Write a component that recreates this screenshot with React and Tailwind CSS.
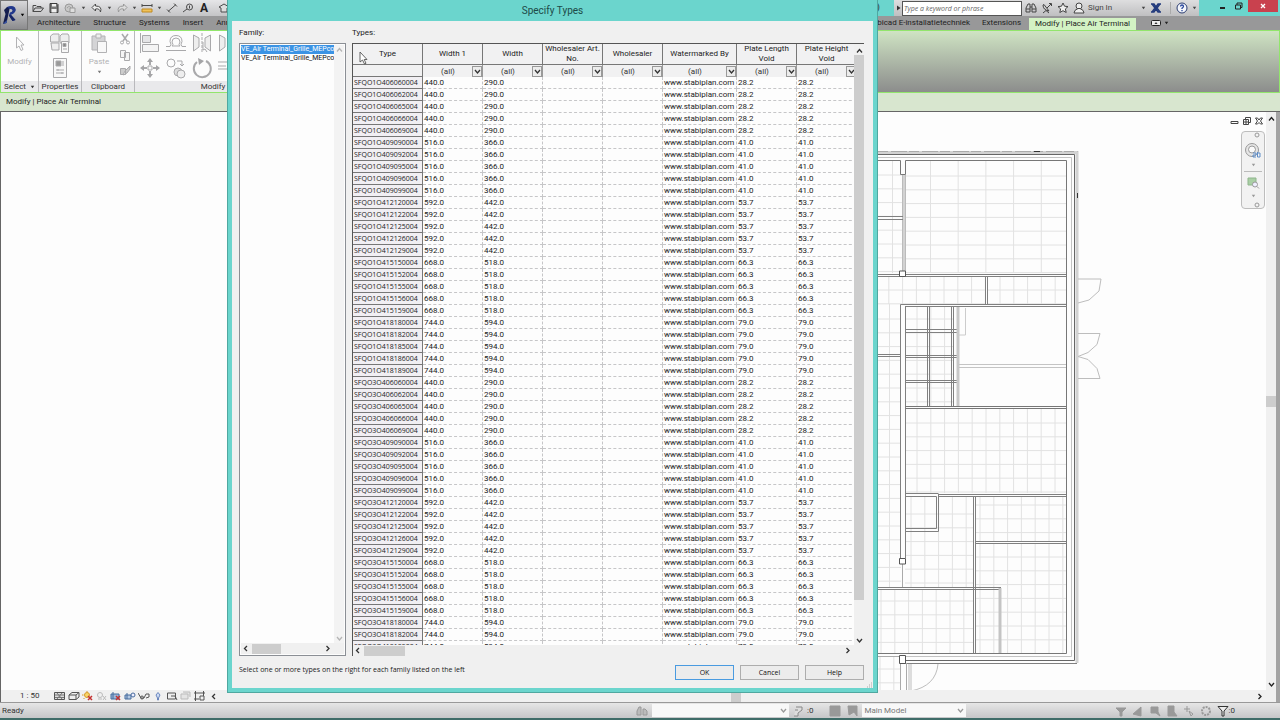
import React from "react";

/* ---------- data ---------- */
const SIZES = [
  { base: "40606", w1: "440.0", w: "290.0", v: "28.2" },
  { base: "40909", w1: "516.0", w: "366.0", v: "41.0" },
  { base: "41212", w1: "592.0", w: "442.0", v: "53.7" },
  { base: "41515", w1: "668.0", w: "518.0", v: "66.3" },
  { base: "41818", w1: "744.0", w: "594.0", v: "79.0" },
];
const ROWS = ["SFQO1O", "SFQO3O"].flatMap((p) =>
  SIZES.flatMap((s) => ["0", "2", "5", "6", "9"].map((n) => ({ type: p + s.base + n + "004", ...s })))
).slice(0, 48);
const COLUMNS = ["Width 1", "Width", "Wholesaler Art. No.", "Wholesaler", "Watermarked By", "Plate Length Void", "Plate Height Void"];

/* ---------- small drawings ---------- */
function Glyph({ w = 12, h = 12, className = "", children }) {
  return (
    <svg width={w} height={h} viewBox={`0 0 ${w} ${h}`} fill="none" stroke="currentColor" strokeWidth="1" className={`shrink-0 ${className}`} aria-hidden="true">
      {children}
    </svg>
  );
}
function Chevron({ dir, className = "" }) {
  const d = { up: "M2 6.5 4.5 3.5 7 6.5", down: "M2 3 4.5 6 7 3", left: "M6 2 3.5 4.5 6 7", right: "M3.5 2 6 4.5 3.5 7" }[dir];
  return <Glyph w={9} h={9} className={className}><path d={d} strokeWidth="1.3" /></Glyph>;
}
function Caret({ className = "" }) {
  return <Glyph w={5} h={4} className={className}><path d="M.8 .8h3.4L2.5 3.2z" fill="currentColor" stroke="none" /></Glyph>;
}
function IconButton({ label, className = "", children }) {
  return <button type="button" aria-label={label} className={`flex shrink-0 items-center justify-center ${className}`}>{children}</button>;
}

function Logo() {
  return (
    <svg width="16" height="20" viewBox="0 0 16 20" aria-hidden="true">
      <path d="M1 5 4 2l3 0-1.500 7L3.500 18 0 19 2.500 9z" fill="#141d4f" />
      <path d="M4 2q5-2 8 .5 1.500 2 0 4.500-1.500 2-4 2.800L12.500 15l-3 1-3.700-5.500L7 7.500q2.500-.3 2.500-2.200Q9 3.800 6.500 4z" fill="#22388c" />
      <path d="M6 10.500 8 10l4.500 5-3 1z" fill="#182563" />
      <path d="M0 19l4-4-.5 3z" fill="#3a58b0" />
    </svg>
  );
}

function QuickAccess() {
  return (
    <div className="flex h-4 w-[340px] shrink-0 items-center gap-1 bg-gradient-to-b from-[#e6e6e8] to-[#c4c4c6] pl-1 text-[#4a4a4a]">
      <IconButton label="Open"><Glyph h={10}><path d="M1 8.5V2.5h3l1 1h4v1.500M1 8.500l2-3.500h8.500L9 8.500z" /></Glyph></IconButton>
      <IconButton label="Save"><Glyph h={10} className="text-[#3b3b3b]"><path d="M2 .5h7l1 1v8H2z" fill="#777" /><path d="M4 1h4v2.500H4zM3.500 6h5v3.500h-5z" fill="#eee" stroke="none" /></Glyph></IconButton>
      <IconButton label="Synchronize" className="text-[#999]"><Glyph h={10}><circle cx="5" cy="5" r="4" fill="#c8c8c8" /><path d="M3 5q2-3 4 0M6 5h5v4.500H6z" fill="#ddd" /></Glyph></IconButton>
      <Caret className="ml-px" />
      <IconButton label="Undo" className="ml-px"><Glyph h={10}><path d="M4.500 1 1 4.500 4.500 8V6q4-1 5 3 2-6-5-6z" fill="#eee" /></Glyph></IconButton>
      <Caret />
      <IconButton label="Redo" className="text-[#999]"><Glyph h={10}><path d="M7.500 1 11 4.500 7.500 8V6q-4-1-5 3-2-6 5-6z" fill="#ddd" /></Glyph></IconButton>
      <Caret />
      <IconButton label="Measure"><Glyph h={10}><path d="M1 2.500h10M1 1v3M11 1v3" /><path d="M1 6h10v3H1z" fill="#f0c25a" stroke="#c08a20" /></Glyph></IconButton>
      <Caret />
      <IconButton label="Aligned Dimension"><Glyph h={10}><path d="M2 8.500 10 1.500M1 6.500l3 3M8 .5l3 3" /></Glyph></IconButton>
      <IconButton label="Tag"><Glyph h={10}><circle cx="7.500" cy="4" r="3" /><path d="M5 6 1 9M7.500 2.500v3" /></Glyph></IconButton>
      <button type="button" aria-label="Text" className="w-3 shrink-0 text-[12px] font-bold leading-4 text-[#222]">A</button>
      <IconButton label="Default 3D View" className="ml-1"><Glyph h={10}><path d="M1 4l5-3 5 3-2 1v4H3V5z" fill="#ddd" /></Glyph></IconButton>
    </div>
  );
}

function InfoCenter() {
  return (
    <div className="flex h-4 w-[305px] shrink-0 items-center bg-gradient-to-b from-[#dededf] to-[#bfbfc1] text-[#444]">
      <IconButton label="Collapse search" className="w-2"><Glyph w={5} h={6}><path d="M1 .5 4.500 3 1 5.500z" fill="#333" stroke="none" /></Glyph></IconButton>
      <input aria-label="Search help" placeholder="Type a keyword or phrase" className="h-[15px] w-[120px] border border-[#555] bg-white px-px font-['Open_Sans',sans-serif] text-[7px] italic text-[#555] outline-none placeholder:text-[#666]" />
      <IconButton label="Search" className="ml-[3px]"><Glyph><path d="M1 10V6l2-4h2v8zM7 10V2h2l2 4v4zM5 5h2M1 7h4M7 7h4" /></Glyph></IconButton>
      <IconButton label="Subscription Center" className="ml-1"><Glyph><path d="M2 3q0 5 6 6L3 2.500zM6 6l4-4M8 1.500h2.500V4M2 11l3-2.500 3 2.500" /></Glyph></IconButton>
      <IconButton label="Favorites" className="ml-1"><Glyph><path d="M6 1l1.500 3.200 3.500.4-2.600 2.300.8 3.600L6 8.700l-3.200 1.800.8-3.600L1 4.600l3.500-.4z" fill="#eee" /></Glyph></IconButton>
      <IconButton label="Account" className="ml-1"><Glyph><circle cx="6" cy="4" r="3" fill="#eee" /><path d="M1 11q0-3 4-4.500h2q4 1.500 4 4.500z" fill="#eee" /></Glyph></IconButton>
      <button type="button" className="ml-[3px] text-[8px]">Sign In</button>
      <Caret className="ml-auto" />
      <IconButton label="Exchange Apps" className="ml-1"><Glyph className="text-[#223a7c]"><path d="M1 2h3l2 3 2-3h3M1 10h3l2-3 2 3h3M2 2l3 4-3 4M10 2 7 6l3 4" strokeWidth="1.400" /></Glyph></IconButton>
      <span className="ml-2 h-3 w-px bg-[#aaa]" />
      <IconButton label="Help" className="ml-[5px]"><Glyph><circle cx="6" cy="6" r="5" fill="#f4f6fb" stroke="#2c3e72" /><path d="M4.500 4.500Q4.600 3 6 3t1.500 1.300Q7.500 5.300 6 6.200V7M6 8v1.200" stroke="#28469c" strokeWidth="1.300" /></Glyph></IconButton>
      <Caret className="ml-1 mr-[2px]" />
    </div>
  );
}

function TitleBar() {
  return (
    <div className="flex h-4 items-center bg-[#6bd5cd]">
      <QuickAccess />
      <span className="ml-auto mr-[14px] text-[9px] text-[#234]">Floor Plan: 1 - Mech)</span>
      <InfoCenter />
      <div className="flex h-4 w-[81px] shrink-0 items-start text-[#222]">
        <IconButton label="Minimize" className="ml-[17px] h-3 w-3"><Glyph><path d="M4 8h5" strokeWidth="2" /></Glyph></IconButton>
        <IconButton label="Restore" className="ml-1 h-3 w-3"><Glyph><path d="M3.500 5h5v4h-5zM5 5V3h5v4.500H8.500" /></Glyph></IconButton>
        <IconButton label="Close" className="ml-auto mr-[2px] h-3 w-[30px] bg-[#c9414e] text-white"><Glyph w={8} h={8}><path d="M2 2l4 4M6 2 2 6" strokeWidth="1.300" /></Glyph></IconButton>
      </div>
    </div>
  );
}

function Tabs() {
  return (
    <nav aria-label="Ribbon tabs" className="flex h-[14px] items-center bg-[#989899] pl-[9px] text-[8px] text-[#222]">
      <div className="flex gap-[13px]">
        {["Architecture", "Structure", "Systems", "Insert", "Annotate"].map((t) => <button type="button" key={t}>{t}</button>)}
      </div>
      <div className="ml-auto flex h-full items-center">
        <button type="button" className="mr-3 whitespace-nowrap">Stabicad E-installatietechniek</button>
        <button type="button" className="mr-2">Extensions</button>
        <button type="button" className="mt-[2px] h-3 whitespace-nowrap bg-[#d3f2c4] px-[6px] leading-[10px]">Modify | Place Air Terminal</button>
        <IconButton label="Minimize ribbon" className="ml-[15px]"><Glyph w={10} h={6}><rect x=".5" y=".5" width="9" height="5" rx="1" fill="#eee" /><path d="M3.500 4 5 2l1.500 2z" fill="#333" stroke="none" /></Glyph></IconButton>
        <Caret className="ml-[3px] mr-[111px]" />
      </div>
    </nav>
  );
}

function Panel({ title, caret, className = "", children }) {
  return (
    <section className={`flex h-full shrink-0 flex-col border-r border-[#b9b9bc] bg-[#fcfcfc] ${className}`}>
      <div className="flex-1">{children}</div>
      <div className="flex h-[11px] items-center justify-center gap-1 bg-[#e9e9eb] text-[8px] text-[#333]">{title}{caret && <Caret />}</div>
    </section>
  );
}

function Ribbon() {
  return (
    <div className="flex h-[63px] border border-[#92e56c] bg-gradient-to-b from-[#cfe4c3] to-[#8c8d8c] text-[#a9a9ab]">
      <Panel title="Select" caret className="w-[38px]">
        <button type="button" className="flex w-full flex-col items-center gap-1 pt-[5px] text-[8px] text-[#b2b2b4]">
          <Glyph w={10} h={16}><path d="M1.500 1v11l2.500-2 2 4.500 2-1-2-4.500h3z" /></Glyph>
          Modify
        </button>
      </Panel>
      <Panel title="Properties" className="w-[43px]">
        <div className="flex flex-col items-center gap-1 pt-[2px]">
          <IconButton label="Type Properties"><Glyph w={22} h={20}><path d="M1.500 3 4 1h6v8H1.500zM11 3l2-2h6l1 2v7H11zM2 10h8v7H3z" fill="#eee" /><path d="M12.500 8.500h7v11h-7z" fill="#f8f8f8" /><path d="M14 10.500h3v3h-3zM14 16h4" fill="#888" /></Glyph></IconButton>
          <IconButton label="Properties"><Glyph w={16} h={22}><path d="M1.500 1.500h13v19h-13z" fill="#f8f8f8" /><path d="M4 4h5v5H4z" fill="#999" /><path d="M11 4v5M4 13h8M4 16h8M6 12v2M10 15v2" /></Glyph></IconButton>
        </div>
      </Panel>
      <Panel title="Clipboard" className="w-[53px]">
        <div className="flex justify-center gap-[10px] pl-1 pt-[2px]">
          <button type="button" className="flex flex-col items-center gap-[2px] text-[8px] text-[#b2b2b4]">
            <Glyph w={18} h={21}><path d="M2 3h13v14H2z" fill="#d4d4d6" /><path d="M6 1h5v4H6z" fill="#eee" /><path d="M7.500 8.500h9v11h-9z" fill="#f8f8f8" /></Glyph>
            Paste
            <Caret className="text-[#777]" />
          </button>
          <div className="flex flex-col gap-1">
            <IconButton label="Cut"><Glyph><path d="M3 1l5 7M9 1 4 8" strokeWidth="1.500" /><circle cx="3" cy="9.500" r="1.500" /><circle cx="9" cy="9.500" r="1.500" /></Glyph></IconButton>
            <IconButton label="Copy"><Glyph><path d="M1.500 1.500h5v7h-5zM5.500 3.500h5v8h-5z" fill="#f4f4f4" /></Glyph></IconButton>
            <IconButton label="Match Type"><Glyph><path d="M1.500 3.500h5v6h-5zM11 1 6 6l-2 4 4-2 3-4z" fill="#ccc" /></Glyph></IconButton>
          </div>
        </div>
      </Panel>
      <Panel title="Modify" className="w-[157px]">
        <div className="grid grid-cols-[26px_26px_26px_26px_26px] gap-y-1 pl-[2px] pt-[2px]">
          <IconButton label="Align"><Glyph w={22} h={20}><path d="M1.500 0v20" /><path d="M3.500 2.500h8v7h-8z" fill="#e4e4e6" /><path d="M3.500 11.500h16v7h-16z" fill="#f4f4f4" /></Glyph></IconButton>
          <IconButton label="Offset"><Glyph w={22} h={20}><path d="M1 17.500h20M1 13.500h4q2-2 0-5 0-6 6-6t6 6q-2 3 0 5h4M7 13q2-1 0-4 0-4 4-4t4 4q-2 3 0 4z" /></Glyph></IconButton>
          <IconButton label="Mirror Pick Axis"><Glyph w={22} h={20}><path d="M2.500 2 8 5v9l-5.500 4zM19.500 2 14 5v9l5.500 4z" fill="#eee" /><path d="M11 0v20" strokeDasharray="3 1" /><path d="M12 9v8l2-1 2 3" /></Glyph></IconButton>
          <IconButton label="Mirror Draw Axis"><Glyph w={22} h={20}><path d="M2.500 2 8 5v9l-5.500 4zM19.500 2 14 5v9l5.500 4z" fill="#eee" /></Glyph></IconButton>
          <span />
          <IconButton label="Move"><Glyph w={22} h={22}><path d="M11 1 14 5H8zM11 21l3-4H8zM1 11l4-3v6zM21 11l-4-3v6z" fill="#a4a4a6" stroke="none" /><path d="M11 5v3M11 14v3M5 11h3M14 11h3" strokeWidth="2" /><path d="M9 9h4v4H9z" /></Glyph></IconButton>
          <IconButton label="Copy elements"><Glyph w={22} h={22}><circle cx="6" cy="6" r="4" /><circle cx="13" cy="15" r="4" fill="#ddd" /><circle cx="16" cy="17" r="4" fill="#eee" /><path d="M12 4h5v5M15 7l2 2 2-2" /></Glyph></IconButton>
          <IconButton label="Rotate"><Glyph w={22} h={22}><path d="M6 5a8.500 8.500 0 1 0 9-1" strokeWidth="2" /><path d="M7 1l6 3-5 4z" fill="#a4a4a6" stroke="none" /></Glyph></IconButton>
          <IconButton label="Trim"><Glyph w={22} h={22}><path d="M1 5h14M1 9h8M1 12h14" /></Glyph></IconButton>
        </div>
      </Panel>
    </div>
  );
}

/* ---------- floor plan ---------- */
function Tiles({ x, y, w, h, sx = 13.8, sy = 13.8, ox = 0, oy = 0 }) {
  const lines = [];
  for (let i = x + (ox || sx); i < x + w; i += sx) lines.push(`M${i} ${y}v${h}`);
  for (let j = y + (oy || sy); j < y + h; j += sy) lines.push(`M${x} ${j}h${w}`);
  return <path d={lines.join("")} stroke="#e2e2e2" />;
}
function FloorPlan() {
  return (
    <svg width="260" height="580" viewBox="860 112 260 580" fill="none" stroke="#808080" className="absolute left-[859px] top-0" aria-label="Floor plan">
      <Tiles x={860} y={160} w={42} h={113} ox={32.500} oy={15} />
      <Tiles x={905} y={160} w={162} h={113} sx={27.700} ox={25.500} oy={16} />
      <Tiles x={860} y={277} w={126} h={27} ox={15} oy={13} />
      <Tiles x={988} y={277} w={79} h={27} ox={12} oy={13} />
      <Tiles x={860} y={304} w={41} h={283} ox={29.500} oy={15} />
      <Tiles x={905} y={307} w={49} h={99} ox={12} oy={12} />
      <Tiles x={905} y={408} w={162} h={85} ox={12} oy={15} />
      <Tiles x={905} y={497} w={69} h={90} ox={6} oy={17} />
      <Tiles x={976} y={497} w={91} h={44} ox={4} oy={8} />
      <Tiles x={976} y={544} w={91} h={109} ox={4} oy={13} />
      <Tiles x={860} y={590} w={114} h={63} ox={21} oy={11} />
      <Tiles x={860} y={657} w={41} h={35} ox={20} oy={12} />
      {/* outer walls */}
      <path d="M860 152.500H1077V663" stroke="#d2d2d2" strokeWidth="3" />
      <path d="M860 151.500H1077.500" stroke="#aaa" strokeDasharray="16 2 10 3" />
      <path d="M1034 151.500h6M1077.500 193v5" stroke="#333" />
      <path d="M860 154.500H1074.500V660.500H904" stroke="#666" />
      <path d="M860 157.500H1071.500V656.500H904" stroke="#c3c3c3" />
      <path d="M904 663.500H1077" />
      <path d="M860 160.500H900.500V174.500H905.500V160.500H1066.500V653.500H860" stroke="#777" />
      {/* upper rooms */}
      <path d="M904 175v98" stroke="#d2d2d2" strokeWidth="4" />
      <path d="M902.500 175v98M905.500 175v98" stroke="#bbb" />
      <path d="M860 216.500h43M860 219.500h43" />
      <path d="M860 274.500h206M860 276.500h206M985.500 277v27M987.500 277v27" />
      <path d="M900.500 304.500H1066M905 306.500h162" />
      <path d="M900.500 304.500V560M905.500 307V558M860 354.500h41M860 356.500h41" />
      <path d="M905 329.500h52M905 332.500h52M905 355.500h52M905 357.500h52M905 380.500h52M905 382.500h52M927.500 307v99M929.500 307v99M951.500 307v99M953.500 307v99" />
      <path d="M958 307v99" stroke="#c8c8c8" strokeWidth="3" />
      <path d="M959 364.500h107M959 367.500h107" stroke="#c4c4c4" />
      <path d="M965.500 308v27h-7" stroke="#ccc" />
      <path d="M905 406.500h161M905 408.500h161" stroke="#777" />
      {/* lower rooms */}
      <path d="M905 493.500h33M905 496.500h31.500v32h-31.500M905 531.500h33.500v-38M938 494.500h128M938 496.500h128" />
      <path d="M973.500 497v156M975.500 497v156M976 541.500h90M976 543.500h90" />
      <path d="M860 587.500h141M860 589.500h139" />
      <path d="M1000 588v65" stroke="#c4c4c4" strokeWidth="3" />
      <path d="M902.500 564v23" stroke="#aaa" />
      <path d="M900.500 663v29M906.500 663v29M860 656.500h41" stroke="#aaa" />
      <path d="M910 664v27" stroke="#ddd" strokeWidth="4" />
      {/* columns */}
      <path d="M899.500 271h6v5.500h-6zM899.500 558.500h6v5.500h-6zM899.500 655.500h6v8h-6z" fill="#fff" stroke="#555" />
      {/* door swings */}
      <path d="M1078 279h23l-2 12-10 9-11 3M1078 333.500h22l-3 11-9 8-10 4 10 3 9 9 3 10h-22M938 664q-2 22-27 27" stroke="#bdbdbd" />
    </svg>
  );
}

function ViewControls() {
  return (
    <div className="flex h-3 items-center bg-[#f0f0f0] pl-[19px] text-[#555]">
      <span className="w-[34px] text-[8px] text-[#333]">1 : 50</span>
      <div className="flex gap-[2px]">
        <IconButton label="Detail Level"><Glyph h={10}><path d="M.5 1.500h10v7H.5z" fill="#ddd" /><path d="M1 4h9M1 6.500h9M3 2l5 6M8 2 3 8" stroke="#777" /></Glyph></IconButton>
        <IconButton label="Visual Style"><Glyph h={10}><path d="M1 4h7v4.500H1zM1 4l3-2.500h7L8 4M11 1.500V6L8 8.500" fill="#eee" /></Glyph></IconButton>
        <IconButton label="Sun Path"><Glyph h={10}><circle cx="5" cy="4" r="2.500" fill="#f8d66b" stroke="#d89a27" /><path d="M5 0v1M0 4h1.500M1.500 8l1-1" stroke="#d89a27" /><path d="M6 5l4 4M10 5 6 9" stroke="#c33131" strokeWidth="1.500" /></Glyph></IconButton>
        <IconButton label="Shadows" className="text-[#bbb]"><Glyph h={10}><circle cx="4" cy="4" r="2.500" /><path d="M2 8h4M7 5l3 4M10 5 7 9" /></Glyph></IconButton>
        <IconButton label="Crop View"><Glyph h={10}><path d="M1 3h8v5H1zM3 1v7" fill="#9db8da" stroke="#456a9c" /><path d="M6 5l4 4M10 5 6 9" stroke="#c33131" strokeWidth="1.500" /></Glyph></IconButton>
        <IconButton label="Show Crop Region"><Glyph h={10}><path d="M1 4h6v4H1zM3 2v6" fill="#b4c8e2" stroke="#456a9c" /><circle cx="9" cy="4" r="2" fill="#eef" stroke="#456a9c" /></Glyph></IconButton>
        <IconButton label="Temporary Hide"><Glyph h={10}><path d="M0 2l3 5h3l2-4 3 0v3l-3 1" /><circle cx="4" cy="6.500" r="1.500" /></Glyph></IconButton>
        <IconButton label="Reveal Hidden"><Glyph h={10}><path d="M6 1.500 8 4 6.500 7v2h-1V7L4 4z" fill="#cddcf4" stroke="#6b86bd" /></Glyph></IconButton>
        <IconButton label="Temporary View Properties"><Glyph h={10}><path d="M1.500 2h8v6h-8z" fill="#eee" /><path d="M5 5h4l2 4" /></Glyph></IconButton>
        <IconButton label="Analytical Model" className="text-[#bbb]"><Glyph h={10}><path d="M1 3h7v5H1zM3 1h7v5" fill="#e4e4e4" /></Glyph></IconButton>
        <IconButton label="Constraints"><Glyph h={10}><path d="M1.500 0v10M9.500 0v5M0 2h11M0 8h5M6 5h4v4H6z" /></Glyph></IconButton>
      </div>
      <IconButton label="Scroll left" className="ml-[3px]"><Chevron dir="left" className="text-[#333]" /></IconButton>
      <span className="ml-[513px] h-3 w-[10px] shrink-0 bg-[#cdcdcd]" />
      <IconButton label="Scroll right" className="ml-auto mr-[2px]"><Chevron dir="right" className="text-[#222]" /></IconButton>
    </div>
  );
}

function NavBar() {
  return (
    <div className="absolute right-px top-[19px] flex w-6 flex-col items-center gap-1 rounded border border-[#bdbdbd] bg-[#f2f2f2] text-[#999]">
      <Glyph w={6} h={6} className="mr-1 self-end"><circle cx="3" cy="3" r="2" /></Glyph>
      <IconButton label="Steering Wheel"><Glyph w={18} h={17}><circle cx="8" cy="8" r="6.500" fill="#e6e6e6" /><circle cx="8" cy="7.500" r="3.500" fill="#fafafa" /><path d="M9 11h3v2H9v2h3M13.500 10v5h2.500v-4h-2.500" stroke="#5f8dc8" /></Glyph></IconButton>
      <Caret />
      <span className="h-px w-[18px] bg-[#bbb]" />
      <IconButton label="Zoom"><Glyph w={14} h={14}><path d="M2 2h8v7H2z" fill="#a9cfa5" stroke="#8fb58c" /><circle cx="9" cy="8.500" r="2.500" fill="#eef" /><path d="M11 10.500l2 2" /></Glyph></IconButton>
      <Caret />
      <Glyph w={6} h={6} className="mr-1 self-end"><circle cx="3" cy="3" r="2" /></Glyph>
    </div>
  );
}

function DrawingArea() {
  return (
    <div className="flex min-h-0 flex-1 border-l border-t border-[#666] bg-[#fdfdfd]">
      <div className="flex min-w-0 flex-1 flex-col">
        <div className="relative min-h-0 flex-1 overflow-hidden">
          <FloorPlan />
          <div className="absolute right-px top-1 flex text-[#444]">
            <IconButton label="Minimize view"><Glyph h={10}><path d="M2 5.500h7v2H2z" /></Glyph></IconButton>
            <IconButton label="Restore view"><Glyph h={10}><path d="M2.500 3.500h5v5h-5zM4.500 3V1.500h5v5H8M4 5h2v2H4z" /></Glyph></IconButton>
            <IconButton label="Close view"><Glyph h={10}><path d="M2.500 2h2l1.500 2 1.500-2h2L7.500 5l2 3h-2L6 6.500 4.500 8h-2l2-3z" /></Glyph></IconButton>
          </div>
          <NavBar />
        </div>
        <ViewControls />
      </div>
      <div className="flex w-[10px] flex-col items-center bg-[#f0f0f0] pb-[13px] pt-[2px] text-[#222]">
        <Chevron dir="up" />
        <span className="mt-[273px] h-[11px] w-[10px] shrink-0 bg-[#cdcdcd]" />
        <Chevron dir="down" className="mt-auto" />
      </div>
      <div className="w-1 bg-[#a3a3a3]" />
    </div>
  );
}

function StatusBar() {
  return (
    <footer className="flex h-[18px] shrink-0 items-center border-b-2 border-t border-b-[#3f6c68] border-t-[#999] bg-gradient-to-b from-[#e6e6e6] to-[#c6c6c8] px-[2px] text-[8px] text-[#333]">
      <span className="w-[634px]">Ready</span>
      <IconButton label="Worksets" className="text-[#999]"><Glyph><path d="M1 10V6l2-4h2v8zM7 10V4h2l2 2v4z" fill="#bbb" /></Glyph></IconButton>
      <Select label="Active workset" value="" className="ml-1 h-[13px] w-[137px]" />
      <IconButton label="Editing requests" className="ml-1 text-[#888]"><Glyph><path d="M3 2h6v3l-4 3v3H1M2 5h3" fill="#ddd" /></Glyph></IconButton>
      <span className="ml-[2px]">:0</span>
      <IconButton label="Design options" className="ml-4 text-[#999]"><Glyph><path d="M1 1h10v10H1z" fill="#999" /></Glyph></IconButton>
      <IconButton label="Pick to edit" className="ml-[5px] text-[#999]"><Glyph><path d="M2 1h9v10l-3-4-5 3z" fill="#999" /></Glyph></IconButton>
      <Select label="Active design option" value="Main Model" className="ml-1 h-[13px] w-[104px]" />
      <div className="ml-auto mr-[43px] flex items-center gap-[5px] text-[#999]">
        <IconButton label="Select Links"><Glyph><path d="M1 3h10L7 7v4H5V7z" fill="#999" /></Glyph></IconButton>
        <IconButton label="Select Underlay"><Glyph><path d="M1 9l8-7v9z" fill="#999" /></Glyph></IconButton>
        <IconButton label="Select Pinned"><Glyph><path d="M2 2h7v5l2 4-4-3H2z" fill="#999" /></Glyph></IconButton>
        <IconButton label="Select by Face"><Glyph><path d="M2 1h6v6l3 4H2z" fill="#999" /></Glyph></IconButton>
        <IconButton label="Drag Elements"><Glyph><path d="M4 1v6M1 4h6M6 6l4 3-2 2z" /></Glyph></IconButton>
        <IconButton label="Background Processes"><Glyph><circle cx="6" cy="6" r="4" strokeWidth="2" strokeDasharray="2 1" /></Glyph></IconButton>
        <button type="button" aria-label="Filter" className="flex items-center text-[#333]"><Glyph><path d="M1 1.500h10L7 6v5H5V6z" fill="#eee" /></Glyph>:0</button>
      </div>
    </footer>
  );
}

function Select({ label, value, className = "" }) {
  return (
    <div className={`relative shrink-0 ${className}`}>
      <select aria-label={label} defaultValue={value} className="block h-full w-full appearance-none bg-[#f8f8f8] px-[2px] text-[8px] text-[#777] outline-none">
        <option value={value}>{value}</option>
      </select>
      <Chevron dir="down" className="pointer-events-none absolute right-px top-[2px] text-[#999]" />
    </div>
  );
}

/* ---------- dialog ---------- */
function FilterSelect({ label }) {
  return (
    <div className="relative h-[11px]">
      <select aria-label={`Filter ${label}`} className="block h-full w-full appearance-none bg-transparent pr-[9px] text-center text-[8px] leading-[11px] text-[#333] outline-none">
        <option>(all)</option>
      </select>
      <span className="pointer-events-none absolute right-0 top-0 flex h-[11px] w-[10px] items-center justify-center border border-[#999] bg-[#ececec] text-[#333]"><Chevron dir="down" /></span>
    </div>
  );
}

function TypesTable() {
  const cell = "border-b border-r border-dashed border-[#c6c6c8] py-0 pl-px pr-0";
  return (
    <table className="w-[504px] table-fixed border-separate border-spacing-0 text-[8px] leading-[11px] text-[#222]">
      <colgroup>
        <col className="w-[70px]" /><col className="w-[60px]" /><col className="w-[60px]" /><col className="w-[60px]" />
        <col className="w-[60px]" /><col className="w-[74px]" /><col className="w-[60px]" /><col className="w-[60px]" />
      </colgroup>
      <thead>
        <tr className="h-[21px] bg-[#f1f1f2]">
          {["Type", ...COLUMNS].map((c) => (
            <th key={c} className="border-b border-r border-[#777] px-[2px] py-0 text-center align-middle font-normal leading-[10px]">{c}</th>
          ))}
        </tr>
        <tr className="h-3 bg-[#f1f1f2]">
          <td className="border-b border-r border-[#777] p-0" />
          {COLUMNS.map((c) => <td key={c} className="border-r border-[#999] p-0"><FilterSelect label={c} /></td>)}
        </tr>
      </thead>
      <tbody>
        {ROWS.map((r) => (
          <tr key={r.type} className="h-3">
            <th scope="row" className="border-b border-r border-[#777] bg-[#f1eff3] px-px py-0 text-left font-['Open_Sans',sans-serif] text-[7px] font-normal leading-[11px]">{r.type}</th>
            <td className={cell}>{r.w1}</td>
            <td className={cell}>{r.w}</td>
            <td className={cell} />
            <td className={cell} />
            <td className={cell}>www.stabiplan.com</td>
            <td className={cell}>{r.v}</td>
            <td className={cell}>{r.v}</td>
          </tr>
        ))}
      </tbody>
    </table>
  );
}

function HScroll({ thumb }) {
  return (
    <div className="flex h-[11px] shrink-0 items-center bg-[#f0f0f0] text-[#333]">
      <Chevron dir="left" />
      <span className={`ml-[2px] h-[10px] bg-[#cdcdcd] ${thumb}`} />
      <Chevron dir="right" className="ml-auto mr-[12px]" />
    </div>
  );
}

function Dialog() {
  const btn = "h-[15px] w-[59px] border bg-[#ececec] font-['Open_Sans',sans-serif] text-[7px] leading-3 text-[#111]";
  return (
    <div role="dialog" aria-label="Specify Types" className="absolute bottom-[27px] left-[227px] top-0 flex w-[651px] flex-col border-x border-b border-[#4fa8a0] bg-[#6bd5cd] px-1 pb-1">
      <h1 className="h-[21px] shrink-0 text-center text-[10px] leading-[21px] text-[#1d4a48]">Specify Types</h1>
      <div className="flex min-h-0 flex-1 flex-col bg-[#f0f0f0] pl-[7px] pr-[9px]">
        <div className="flex min-h-0 flex-1 gap-[6px]">
          <div className="flex w-[107px] shrink-0 flex-col">
            <h2 className="h-[22px] shrink-0 pt-[3px] text-[8px] leading-[18px] text-[#222]">Family:</h2>
            <div className="flex min-h-0 flex-1 flex-col border border-[#8b8f95] bg-[#fdfdfd] p-px">
              <div className="flex min-h-0 flex-1">
                <ul aria-label="Family" className="min-w-0 flex-1 overflow-hidden text-[7px] leading-[9px] text-[#111]">
                  <li className="whitespace-nowrap bg-[#3b93e4] text-white">VE_Air Terminal_Grille_MEPcontent_01</li>
                  <li className="whitespace-nowrap">VE_Air Terminal_Grille_MEPcontent_02</li>
                </ul>
                <div className="flex w-[10px] flex-col items-center justify-between bg-[#f3f3f3] text-[#b5b5b5]"><Chevron dir="up" /><Chevron dir="down" /></div>
              </div>
              <HScroll thumb="w-[29px]" />
            </div>
          </div>
          <div className="flex min-w-0 flex-1 flex-col">
            <h2 className="h-[22px] shrink-0 pt-[3px] text-[8px] leading-[18px] text-[#222]">Types:</h2>
            <div className="flex min-h-0 flex-1 flex-col border-l border-t border-[#555] bg-[#fdfdfd]">
              <div className="flex min-h-0 flex-1">
                <div className="min-h-0 min-w-0 flex-1 overflow-hidden"><TypesTable /></div>
                <div className="flex w-[10px] flex-col items-center bg-[#f0f0f0] pt-[2px] text-[#333]">
                  <Chevron dir="up" />
                  <span className="w-[10px] flex-1 bg-[#cdcdcd]" />
                  <Chevron dir="down" className="mt-[36px]" />
                </div>
              </div>
              <HScroll thumb="w-[41px]" />
            </div>
          </div>
        </div>
        <div className="flex h-8 shrink-0 items-start pt-[9px]">
          <p className="flex-1 font-['Open_Sans',sans-serif] text-[7px] leading-[10px] text-[#222]">Select one or more types on the right for each family listed on the left</p>
          <div className="flex gap-[6px]">
            <button type="button" className={`${btn} border-[#4a9be0]`}>OK</button>
            <button type="button" className={`${btn} border-[#adadad]`}>Cancel</button>
            <button type="button" className={`${btn} border-[#adadad]`}>Help</button>
          </div>
        </div>
      </div>
      <Glyph w={7} h={7} className="absolute bottom-1 right-1 text-[#aaa]"><path d="M1 6h1M3 6h1M5 6h1M3 4h1M5 4h1M5 2h1" /></Glyph>
      <svg width="9" height="14" viewBox="0 0 9 14" className="absolute left-[131px] top-[51px]" aria-hidden="true">
        <path d="M1 1v10l2.500-2 2 4 1.500-.7L5.200 8.500H8z" fill="#fff" stroke="#555" strokeWidth=".9" />
      </svg>
    </div>
  );
}

export default function App() {
  return (
    <div className="relative flex h-screen flex-col overflow-hidden bg-[#f0f0f0] font-['Roboto','Open_Sans',sans-serif]">
      <header className="shrink-0">
        <div className="flex">
          <button type="button" aria-label="Application menu" className="flex h-[30px] w-7 shrink-0 items-center justify-center gap-px border border-[#777] bg-gradient-to-b from-[#d8d8da] to-[#8c8c8e]"><Logo /><Caret /></button>
          <div className="min-w-0 flex-1"><TitleBar /><Tabs /></div>
        </div>
        <Ribbon />
        <div className="h-[18px] bg-[#d8e6cf] pl-[6px] text-[8px] leading-[18px] text-[#222]">Modify | Place Air Terminal</div>
      </header>
      <DrawingArea />
      <StatusBar />
      <Dialog />
    </div>
  );
}
